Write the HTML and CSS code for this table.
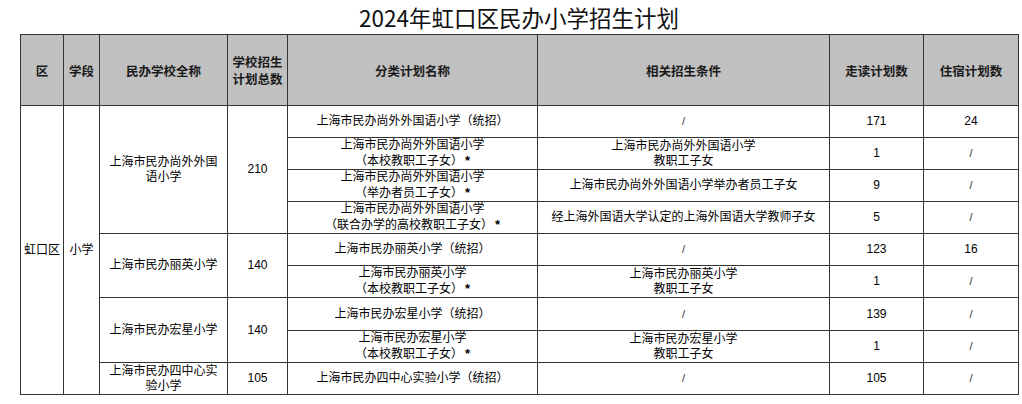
FILE: index.html
```html
<!DOCTYPE html>
<html lang="zh-CN">
<head>
<meta charset="utf-8">
<title>2024年虹口区民办小学招生计划</title>
<link rel="stylesheet" href="styles.css">
</head>
<body>
<div class="page">
  <h1 class="title">2024年虹口区民办小学招生计划</h1>
  <table class="plan">
    <colgroup>
      <col class="c-district">
      <col class="c-stage">
      <col class="c-school">
      <col class="c-total">
      <col class="c-cat">
      <col class="c-cond">
      <col class="c-day">
      <col class="c-board">
    </colgroup>
    <thead>
      <tr class="head">
        <th>区</th>
        <th>学段</th>
        <th>民办学校全称</th>
        <th>学校招生<br>计划总数</th>
        <th>分类计划名称</th>
        <th>相关招生条件</th>
        <th>走读计划数</th>
        <th>住宿计划数</th>
      </tr>
    </thead>
    <tbody>
      <tr>
        <td rowspan="9">虹口区</td>
        <td rowspan="9">小学</td>
        <td rowspan="4">上海市民办尚外外国<br>语小学</td>
        <td rowspan="4">210</td>
        <td>上海市民办尚外外国语小学（统招）</td>
        <td class="slash">/</td>
        <td>171</td>
        <td>24</td>
      </tr>
      <tr>
        <td>上海市民办尚外外国语小学<br>（本校教职工子女）<span class="star">*</span></td>
        <td>上海市民办尚外外国语小学<br>教职工子女</td>
        <td>1</td>
        <td class="slash">/</td>
      </tr>
      <tr>
        <td>上海市民办尚外外国语小学<br>（举办者员工子女）<span class="star">*</span></td>
        <td>上海市民办尚外外国语小学举办者员工子女</td>
        <td>9</td>
        <td class="slash">/</td>
      </tr>
      <tr>
        <td>上海市民办尚外外国语小学<br>（联合办学的高校教职工子女）<span class="star">*</span></td>
        <td>经上海外国语大学认定的上海外国语大学教师子女</td>
        <td>5</td>
        <td class="slash">/</td>
      </tr>
      <tr>
        <td rowspan="2">上海市民办丽英小学</td>
        <td rowspan="2">140</td>
        <td>上海市民办丽英小学（统招）</td>
        <td class="slash">/</td>
        <td>123</td>
        <td>16</td>
      </tr>
      <tr>
        <td>上海市民办丽英小学<br>（本校教职工子女）<span class="star">*</span></td>
        <td>上海市民办丽英小学<br>教职工子女</td>
        <td>1</td>
        <td class="slash">/</td>
      </tr>
      <tr class="tall">
        <td rowspan="2">上海市民办宏星小学</td>
        <td rowspan="2">140</td>
        <td>上海市民办宏星小学（统招）</td>
        <td class="slash">/</td>
        <td>139</td>
        <td class="slash">/</td>
      </tr>
      <tr>
        <td>上海市民办宏星小学<br>（本校教职工子女）<span class="star">*</span></td>
        <td>上海市民办宏星小学<br>教职工子女</td>
        <td>1</td>
        <td class="slash">/</td>
      </tr>
      <tr>
        <td>上海市民办四中心实<br>验小学</td>
        <td>105</td>
        <td>上海市民办四中心实验小学（统招）</td>
        <td class="slash">/</td>
        <td>105</td>
        <td class="slash">/</td>
      </tr>
    </tbody>
  </table>
</div>
</body>
</html>
```

FILE: styles.css
```css
html, body {
  margin: 0;
  padding: 0;
  background: #ffffff;
}

.page {
  padding-left: 20px;
  width: 998px;
}

.title {
  margin: 0;
  height: 34px;
  line-height: 34px;
  text-align: center;
  font-family: "Noto Sans CJK SC", "Liberation Sans", sans-serif;
  font-size: 22.5px;
  font-weight: normal;
  color: #111111;
}

.plan {
  width: 998px;
  table-layout: fixed;
  border-collapse: collapse;
  font-family: "Liberation Sans", "Noto Sans CJK SC", sans-serif;
  font-size: 12px;
  color: #000000;
}

.c-district { width: 43px; }
.c-stage { width: 36px; }
.c-school { width: 128px; }
.c-total { width: 60px; }
.c-cat { width: 250px; }
.c-cond { width: 292px; }
.c-day { width: 94px; }
.c-board { width: 95px; }

.plan th,
.plan td {
  border: 1px solid #333333;
  padding: 0;
  text-align: center;
  vertical-align: middle;
  line-height: 15px;
  white-space: nowrap;
}

.plan th {
  background: #c0c0c0;
  font-family: "Noto Sans CJK SC", sans-serif;
  font-weight: bold;
  font-size: 12.5px;
  line-height: 17px;
  color: #1a1a1a;
}

.head {
  height: 71px;
}

.plan tbody tr {
  height: 32px;
}

.plan tbody tr.tall {
  height: 33px;
}

.star {
  font-size: 13px;
  font-weight: bold;
  padding-left: 2px;
}

.plan td.slash {
  font-size: 11px;
  color: #333333;
}
```
